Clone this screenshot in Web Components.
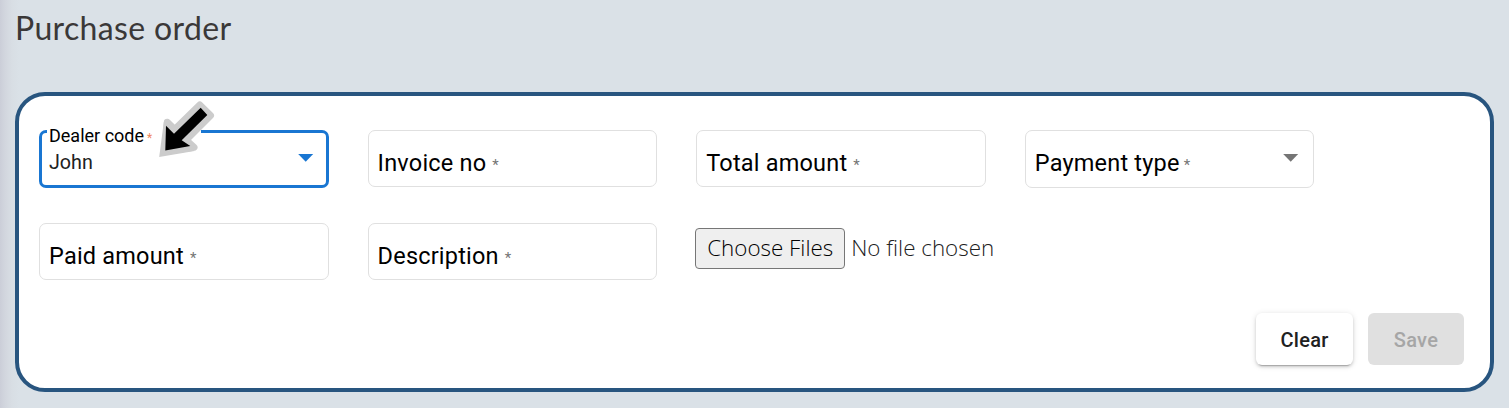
<!DOCTYPE html>
<html lang="en">
<head>
<meta charset="utf-8">
<title>Purchase order</title>
<style>
body{margin:0;height:408px;overflow:hidden;background:#dae1e7;font-family:Roboto,sans-serif}
</style>
</head>
<body>
<purchase-page></purchase-page>
<script>
class FormField extends HTMLElement{
  connectedCallback(){
    const kind=this.getAttribute('kind')||'input';
    const active=this.hasAttribute('value');
    const label=this.getAttribute('label');
    const arrow=kind==='select'?'<svg class="caret" width="16" height="8" viewBox="0 0 16 8"><path d="M.2 0h15L7.7 7.7z"/></svg>':'';
    this.attachShadow({mode:'open'}).innerHTML=`<style>
:host{display:block;height:${kind==='select'?58:57}px;color:#000}
.box{box-sizing:border-box;height:100%;border:1px solid #e0e0e0;border-radius:7px;display:flex;align-items:center;padding:8px 14px 0 9px;position:relative}
.label{font-size:23.5px;line-height:28px;white-space:nowrap;letter-spacing:.2px}
.star{font-size:15px;line-height:28px;color:#757575;margin-left:var(--gap,6px);position:relative;top:2px}
.caret{display:block;margin-left:auto;position:relative;top:-5px;fill:#757575}
.active{border:3px solid #1976d2;padding:5px 12px 0 7px}
.active .label{position:absolute;top:-8px;left:5px;padding:0 2px;background:#fff;font-size:18px;line-height:22px;width:150px;letter-spacing:0}
.active .star{color:#f0875e;font-size:12px;margin-left:3px;line-height:20px;top:0}
.value{font-size:19.7px;line-height:24px;color:#212121;position:relative;top:1px}
.active .caret{fill:#1976d2;top:-4px}
</style>
<div class="box${active?' active':''}">${active
  ?`<span class="label">${label}<span class="star">*</span></span><span class="value">${this.getAttribute('value')}</span>`
  :`<span class="label">${label}</span><span class="star">*</span>`}${arrow}</div>`;
  }
}
customElements.define('form-field',FormField);

class FilePicker extends HTMLElement{
  connectedCallback(){
    this.attachShadow({mode:'open'}).innerHTML=`<style>
:host{display:flex;align-items:center;margin:5px 0 0 -1px;height:41px;font:300 22.4px "Open Sans",sans-serif;white-space:nowrap}
.btn{box-sizing:border-box;flex:none;width:150px;height:41px;border:1px solid #767676;border-radius:4px;background:#efefef;display:flex;align-items:center;justify-content:center;color:#000;padding-bottom:2px}
.name{margin-left:6px;color:#212121;padding-bottom:2px}
</style><span class="btn">Choose Files</span><span class="name">No file chosen</span>`;
  }
}
customElements.define('file-picker',FilePicker);

class ActionButton extends HTMLElement{
  connectedCallback(){
    this.attachShadow({mode:'open'}).innerHTML=`<style>
:host{display:flex;align-items:center;justify-content:center;box-sizing:border-box;padding-top:2px;width:97px;height:52px;border-radius:6px;background:#fff;color:#212121;font-size:20px;font-weight:500;letter-spacing:.3px;box-shadow:0 4px 1px -3px rgba(0,0,0,.2),0 2px 3px rgba(0,0,0,.14),0 1px 6px rgba(0,0,0,.12)}
:host([disabled]){width:96px;background:#e0e0e0;color:#a6a6a6;box-shadow:none}
</style><slot></slot>`;
  }
}
customElements.define('action-button',ActionButton);

class PointerArrow extends HTMLElement{
  connectedCallback(){
    this.attachShadow({mode:'open'}).innerHTML=`<style>
:host{position:absolute;left:155px;top:98px;width:62px;height:62px}svg{display:block}
</style><svg width="62" height="62" viewBox="155 98 62 62">
<path fill="#ccc" d="M159.2 157L163.8 122L194.5 151z"/>
<path fill="#ccc" stroke="#ccc" stroke-width="7" stroke-linejoin="round" d="M165.5 151L167.3 122.3L174.7 129.5L199.8 105L210.5 115.5L186 140L194 147.3z"/>
<path d="M165.3 150.5L166 125.7L174 133.7L200.7 107.7L207.3 115L181.7 140.3L190.3 146z"/></svg>`;
  }
}
customElements.define('pointer-arrow',PointerArrow);

class PurchasePage extends HTMLElement{
  connectedCallback(){
    this.attachShadow({mode:'open'}).innerHTML=`<style>
:host{display:block;box-sizing:border-box;height:408px;padding:7px 15px 0;background:linear-gradient(90deg,#cbced8 0,#d2d6de 5px,#d8dee4 12px,#dae1e7 19px)}
h1{margin:0;height:85px;font:400 32px/42px Lato,sans-serif;color:#3a3838;letter-spacing:.35px}
main{box-sizing:border-box;height:300px;border:4px solid #28557f;border-radius:30px;background:#fff;padding:34px 26px 0 20px;display:flex;flex-direction:column}
.grid{display:grid;grid-template-columns:repeat(4,289.5px);column-gap:39.1px;grid-template-rows:58px 57px;row-gap:35px}
.actions{display:flex;justify-content:flex-end;gap:15px;margin-top:33px}
</style>
<h1>Purchase order</h1>
<main>
<div class="grid">
<form-field kind="select" label="Dealer code" value="John"></form-field>
<form-field label="Invoice no"></form-field>
<form-field label="Total amount"></form-field>
<form-field kind="select" label="Payment type" style="--gap:4px"></form-field>
<form-field label="Paid amount"></form-field>
<form-field label="Description"></form-field>
<file-picker></file-picker>
</div>
<div class="actions"><action-button>Clear</action-button><action-button disabled>Save</action-button></div>
</main>
<pointer-arrow></pointer-arrow>`;
  }
}
customElements.define('purchase-page',PurchasePage);
</script>
</body>
</html>
